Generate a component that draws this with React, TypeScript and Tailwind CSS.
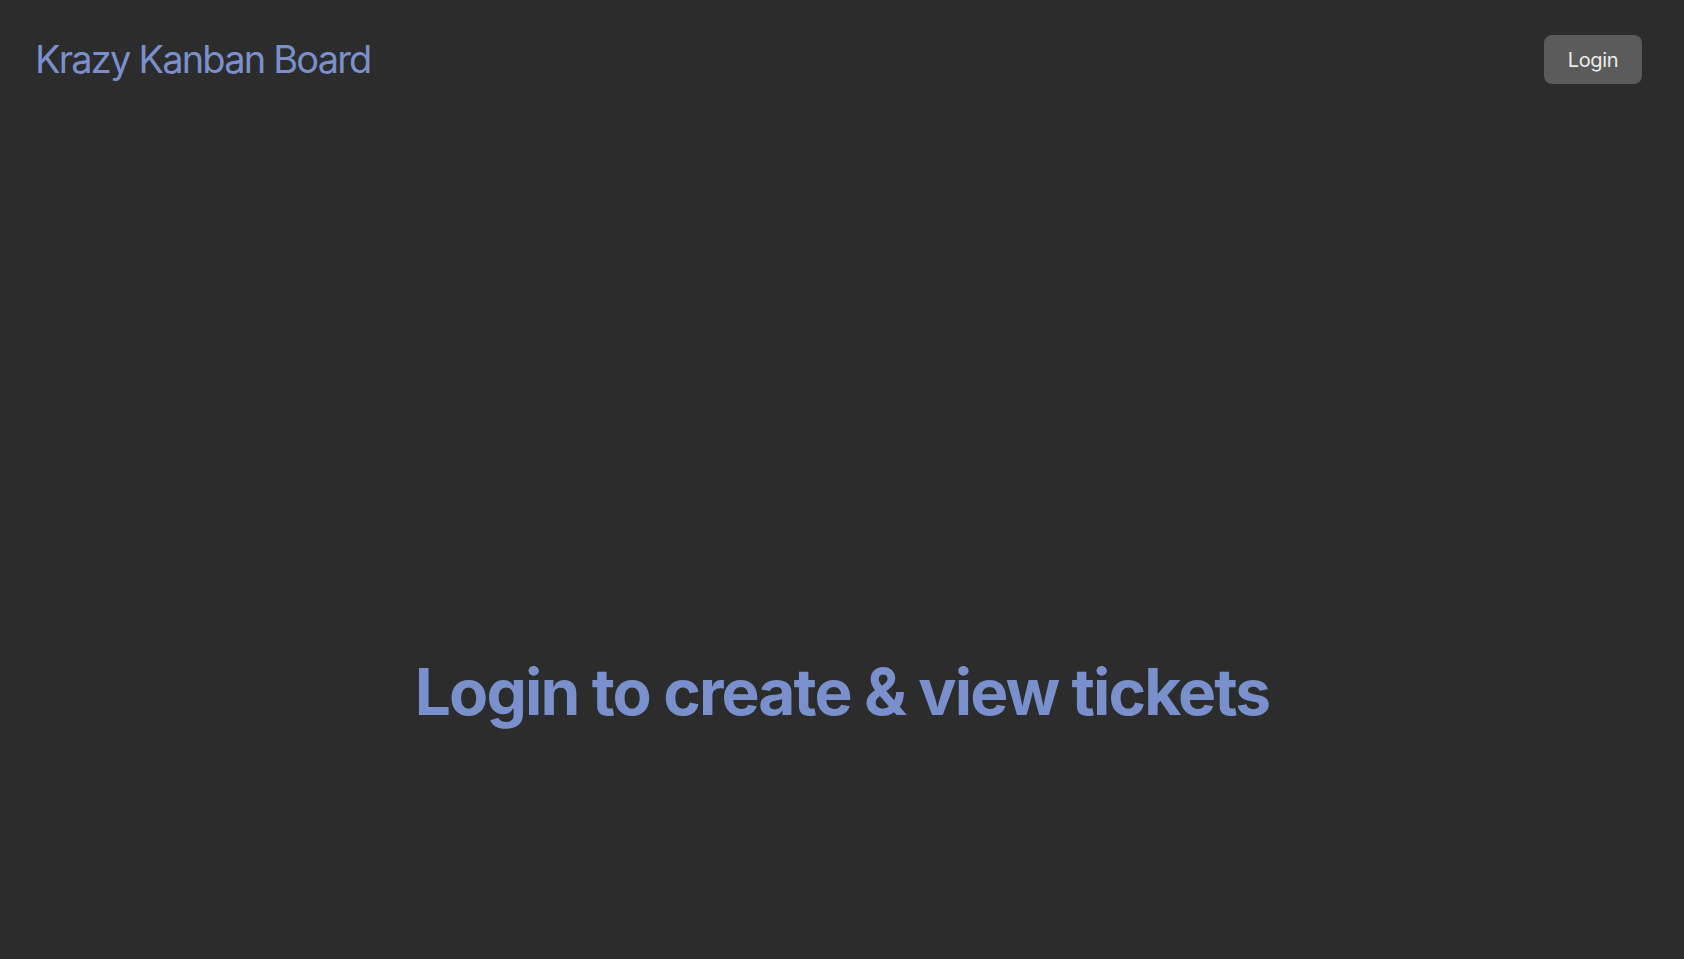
import React from "react";

const App = () => {
  return (
    <div
      className="min-h-screen bg-[#2c2c2c] flex flex-col"
      style={{ fontFamily: "Inter, 'Noto Sans', sans-serif" }}
    >
      {/* Nav */}
      <nav className="flex items-center justify-between pl-[35px] pr-[42px] pt-[35px]">
        <h1 className="text-[38px] leading-[49px] font-normal text-[#7990cc] tracking-[-1.8px]">
          Krazy Kanban Board
        </h1>
        <button className="h-[49px] w-[98px] rounded-[8px] bg-[#5b5b5b] text-[20px] text-[#ececec] font-normal tracking-[-0.3px]">
          Login
        </button>
      </nav>

      {/* Login prompt */}
      <main className="flex justify-center pt-[568px]">
        <h2 className="text-[64px] leading-[80px] font-bold text-[#7990cc] tracking-[-1.9px]">
          Login to create &amp; view tickets
        </h2>
      </main>
    </div>
  );
};

export default App;
